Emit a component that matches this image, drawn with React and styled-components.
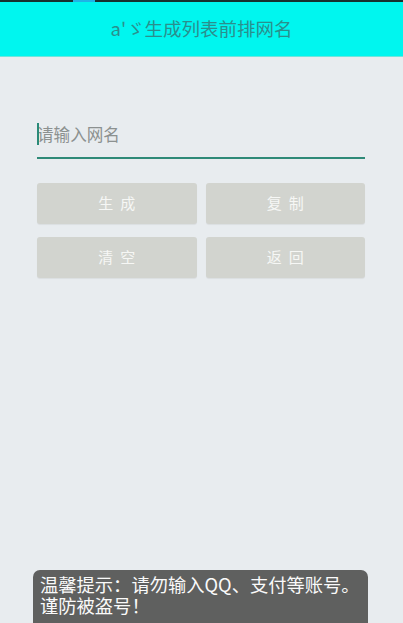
import React from "react";
import styled, { createGlobalStyle } from "styled-components";

const Global = createGlobalStyle`
  html, body { margin: 0; padding: 0; height: 100%; }
  body { background: #e8ecef; font-family: "Noto Sans CJK SC", "Noto Sans", sans-serif; overflow: hidden; }
  #root { height: 100%; }
`;

const Page = styled.div`
  position: relative;
  width: 403px;
  height: 623px;
  background: #e8ecef;
  display: flex;
  flex-direction: column;
`;

const StatusStrip = styled.div`
  height: 2px;
  background: #17302f;
  display: flex;
`;

const StatusBlip = styled.div`
  margin-left: 73px;
  width: 22px;
  background: #1fb4e6;
`;

const Header = styled.header`
  height: 55px;
  background: #00f6ef;
  display: flex;
  align-items: center;
  justify-content: center;
  color: #2a8f8d;
  font-size: 18.5px;
  padding-bottom: 2px;
  box-sizing: border-box;
  border-bottom: 1px solid #6fe6dc;
`;

const Content = styled.main`
  padding: 62px 38px 0 37px;
  display: flex;
  flex-direction: column;
`;

const Field = styled.div`
  position: relative;
  height: 38px;
  border-bottom: 2px solid #2f8a78;
  display: flex;
  align-items: center;
`;

const Cursor = styled.span`
  position: absolute;
  left: 0;
  top: 4px;
  width: 2px;
  height: 22px;
  background: #2a8a78;
`;

const Input = styled.input`
  border: none;
  outline: none;
  background: transparent;
  font-family: "Noto Sans CJK SC", sans-serif;
  font-size: 16.6px;
  color: #333;
  padding: 0 0 9px 0;
  margin-left: 0;
  width: 100%;
  caret-color: transparent;
  &::placeholder { color: #8c9190; }
`;

const Grid = styled.div`
  margin-top: 24px;
  display: grid;
  grid-template-columns: 1fr 1fr;
  column-gap: 9px;
  row-gap: 13px;
`;

const Btn = styled.button`
  height: 41px;
  border: none;
  border-radius: 3px;
  background: #d2d4cf;
  box-shadow: 0 1px 1px rgba(0,0,0,0.06);
  color: #f6f7f5;
  font-family: "Noto Sans CJK SC", sans-serif;
  font-size: 15px;
  letter-spacing: 7px;
  text-indent: 7px;
  padding: 0 0 2px 0;
`;

const Toast = styled.div`
  position: absolute;
  left: 33px;
  top: 570px;
  width: 335px;
  height: 60px;
  box-sizing: border-box;
  border-radius: 7px;
  background: #5f605f;
  color: #fafafa;
  font-size: 18.3px;
  padding: 4px 7px;
  white-space: nowrap;
  display: flex;
  flex-direction: column;
`;

const ToastLine = styled.span`
  display: block;
  height: 21px;
  line-height: 21px;
`;

export default function App() {
  return (
    <>
      <Global />
      <Page>
        <StatusStrip><StatusBlip /></StatusStrip>
        <Header>a'ゞ生成列表前排网名</Header>
        <Content>
          <Field>
            <Cursor />
            <Input placeholder="请输入网名" />
          </Field>
          <Grid>
            <Btn>生成</Btn>
            <Btn>复制</Btn>
            <Btn>清空</Btn>
            <Btn>返回</Btn>
          </Grid>
        </Content>
        <Toast>
          <ToastLine>温馨提示：请勿输入QQ、支付等账号。</ToastLine>
          <ToastLine>谨防被盗号！</ToastLine>
        </Toast>
      </Page>
    </>
  );
}
